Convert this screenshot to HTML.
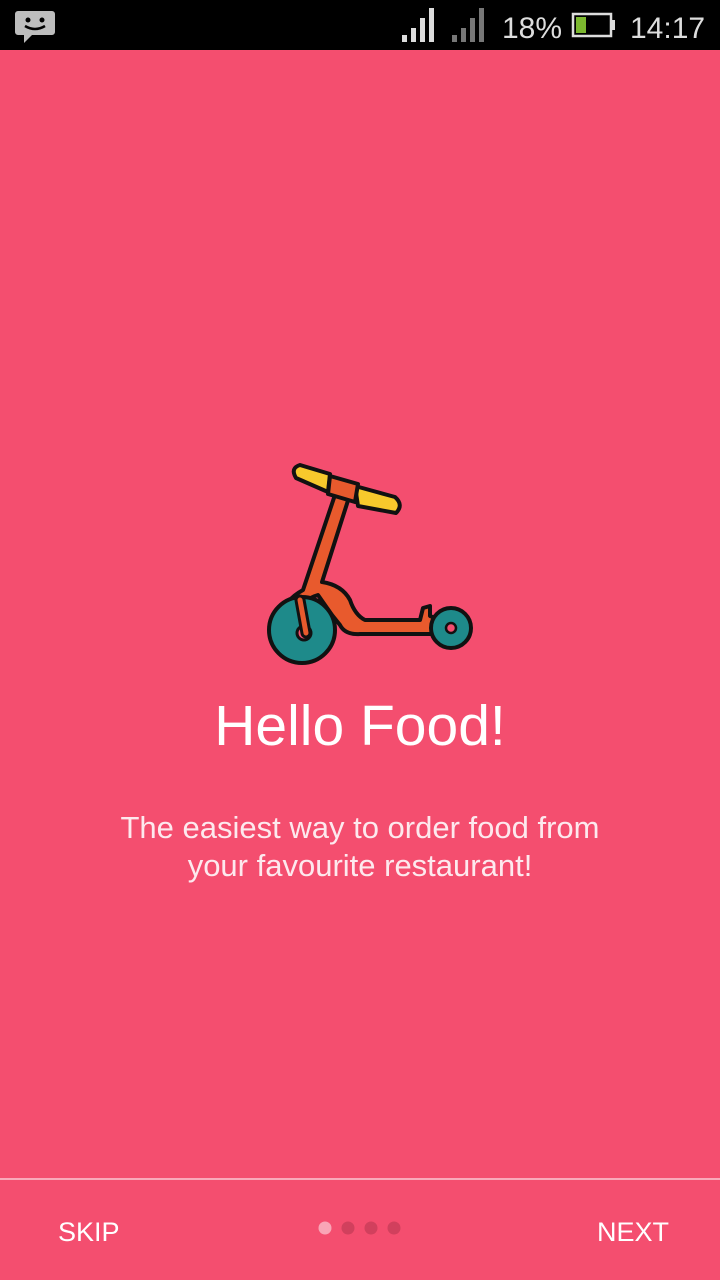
<!DOCTYPE html>
<html><head><meta charset="utf-8"><style>
body{margin:0;width:720px;height:1280px;background:#f44e6f;font-family:"Liberation Sans",sans-serif;position:relative;overflow:hidden}
.sb{position:absolute;left:0;top:0;width:720px;height:50px;background:#000}
.t{position:absolute;color:#fff;text-align:center;width:720px}
</style></head><body>
<div class="sb">
<svg width="720" height="50" style="position:absolute;left:0;top:0">
<path d="M18 11h34a3 3 0 0 1 3 3v18a3 3 0 0 1-3 3H32l-8 8v-8h-6a3 3 0 0 1-3-3V14a3 3 0 0 1 3-3z" fill="#bdbdbd"/>
<circle cx="28" cy="20" r="2.5" fill="#000"/><circle cx="42" cy="20" r="2.5" fill="#000"/>
<path d="M25 26q10 6 20 0" stroke="#000" stroke-width="2.5" fill="none"/>
<g fill="#ddd"><rect x="402" y="35" width="5" height="7"/><rect x="411" y="28" width="5" height="14"/><rect x="420" y="18" width="5" height="24"/><rect x="429" y="8" width="5" height="34"/></g>
<g fill="#777"><rect x="452" y="35" width="5" height="7"/><rect x="461" y="28" width="5" height="14"/><rect x="470" y="18" width="5" height="24"/><rect x="479" y="8" width="5" height="34"/></g>
<text x="502" y="38" fill="#ddd" font-family="Liberation Sans" font-size="30">18%</text>
<rect x="573" y="14" width="38" height="22" fill="none" stroke="#ddd" stroke-width="2.5"/>
<rect x="576" y="17" width="10" height="16" fill="#7cb82f"/>
<rect x="612" y="20" width="3" height="10" fill="#ddd"/>
<text x="630" y="38" fill="#ddd" font-family="Liberation Sans" font-size="30">14:17</text>
</svg></div>
<svg width="720" height="1280" style="position:absolute;left:0;top:0">
<g stroke="#111" stroke-width="4" stroke-linejoin="round" stroke-linecap="round">
<path d="M340 480 L303 590 Q285 600 282 615 L297 618 Q300 600 318 595 L332 615 L340 625 Q345 635 360 634 L432 634 Q445 632 440 620 L430 616 L430 606 L423 608 L420 620 L365 620 Q355 615 350 600 Q342 585 322 582 L352 488 Z" fill="#e85a2d"/>
<path d="M296 478 Q290 468 300 465 L330 474 L328 492 Z" fill="#f7c92c"/>
<path d="M355 486 L395 497 Q404 505 396 513 L358 506 Z" fill="#f7c92c"/>
<path d="M330 476 L358 484 L355 502 L328 494 Z" fill="#e85a2d"/>
<circle cx="302" cy="630" r="33" fill="#1e8a8a"/>
<circle cx="451" cy="628" r="20" fill="#1e8a8a"/>
</g>
<circle cx="304" cy="633" r="7" fill="#f44e6f" stroke="#111" stroke-width="3"/>
<path d="M300 600 L306 633" stroke="#111" stroke-width="11" stroke-linecap="round"/>
<path d="M300 600 L306 633" stroke="#e85a2d" stroke-width="5" stroke-linecap="round"/>
<circle cx="451" cy="628" r="5" fill="#f44e6f" stroke="#111" stroke-width="2.5"/>
</svg>
<div class="t" style="top:693px;font-size:57px">Hello Food!</div>
<div class="t" style="top:809px;font-size:31px;line-height:38px;color:#fde9ee">The easiest way to order food from<br>your favourite restaurant!</div>
<div style="position:absolute;left:0;top:1178px;width:720px;height:2px;background:#f9a9ba"></div>
<div style="position:absolute;left:58px;top:1217px;color:#fff;font-size:27px">SKIP</div>
<div style="position:absolute;left:597px;top:1217px;color:#fff;font-size:27px">NEXT</div>
<svg width="720" height="1280" style="position:absolute;left:0;top:0">
<circle cx="325" cy="1228" r="6.5" fill="#f9a5b6"/><circle cx="348" cy="1228" r="6.5" fill="#d1405d"/><circle cx="371" cy="1228" r="6.5" fill="#d1405d"/><circle cx="394" cy="1228" r="6.5" fill="#d1405d"/>
</svg>
</body></html>
